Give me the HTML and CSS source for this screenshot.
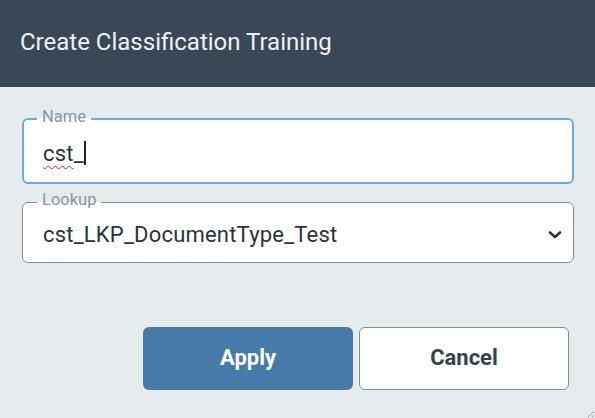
FILE: index.html
```html
<!DOCTYPE html>
<html>
<head>
<meta charset="utf-8">
<link rel="stylesheet" href="styles.css">
</head>
<body>
<div class="dialog">
  <header class="header">Create Classification Training</header>
  <main class="content">
    <fieldset class="field field-focus">
      <legend class="field-label">Name</legend>
      <div class="field-value"><span class="misspelled">cst</span>_<span class="caret"></span></div>
    </fieldset>
    <fieldset class="field field-select">
      <legend class="field-label">Lookup</legend>
      <div class="field-value select-row">
        <span>cst_LKP_DocumentType_Test</span>
        <svg class="chevron" width="14" height="10" viewBox="0 0 14 10"><path d="M2 2.5 L7 7 L12 2.5" fill="none" stroke="#2c3440" stroke-width="2.6" stroke-linecap="round" stroke-linejoin="round"/></svg>
      </div>
    </fieldset>
    <div class="actions">
      <button class="btn btn-primary">Apply</button>
      <button class="btn btn-secondary">Cancel</button>
    </div>
  </main>
  <svg class="grip" width="10" height="10" viewBox="0 0 10 10"><path d="M9 3 L3 9 M9 7 L7 9" stroke="#9aa3ab" stroke-width="1"/></svg>
</div>
</body>
</html>
```
FILE: styles.css
```css
html, body {
  margin: 0;
  padding: 0;
}
body {
  width: 595px;
  height: 418px;
  overflow: hidden;
  background: #e6ebee;
  font-family: Roboto, "Liberation Sans", sans-serif;
}
.dialog {
  position: relative;
  height: 418px;
}
.header {
  height: 87px;
  background: #3a4756;
  color: #eef1f3;
  font-size: 24px;
  display: flex;
  align-items: center;
  padding-left: 20px;
  padding-bottom: 3px;
  box-sizing: border-box;
}
.content {
  padding: 21px 21px 0 22px;
}
.field {
  margin: 0;
  padding: 0 19px;
  background: #fff;
  border-radius: 6px;
  box-sizing: border-box;
}
.field-focus {
  border: 2px solid #66aaea;
}
.field-select {
  border: 1px solid #7e8c9b;
  margin-top: 7px;
  padding-left: 20px;
}
.field-label {
  font-size: 16.5px;
  line-height: 18px;
  color: #8996a4;
  padding: 0 5px 4px;
  margin-left: -6px;
}
.field-value {
  font-size: 22px;
  letter-spacing: 0.2px;
  color: #29333f;
  height: 52px;
  display: flex;
  align-items: center;
  padding-bottom: 6px;
  box-sizing: border-box;
}
.field-select .field-value {
  height: 49px;
  padding-bottom: 6px;
}
.misspelled {
  text-decoration: underline wavy #e02020;
  text-decoration-thickness: 1px;
  text-underline-offset: 4px;
}
.caret {
  display: inline-block;
  width: 2px;
  height: 24px;
  background: #1f2730;
}
.select-row {
  justify-content: space-between;
}
.chevron {
  margin-right: -8px;
}
.actions {
  display: flex;
  justify-content: flex-end;
  gap: 6px;
  margin-top: 64px;
  padding-right: 5px;
}
.btn {
  width: 210px;
  height: 63px;
  border-radius: 6px;
  font-family: Roboto, "Liberation Sans", sans-serif;
  font-size: 22px;
  font-weight: 700;
  cursor: pointer;
  padding-bottom: 3px;
}
.btn-primary {
  background: #467aa9;
  border: none;
  color: #fff;
}
.btn-secondary {
  background: #fff;
  border: 1px solid #7e8c9b;
  color: #364150;
}
.grip {
  position: absolute;
  right: 0;
  bottom: 0;
}
```
